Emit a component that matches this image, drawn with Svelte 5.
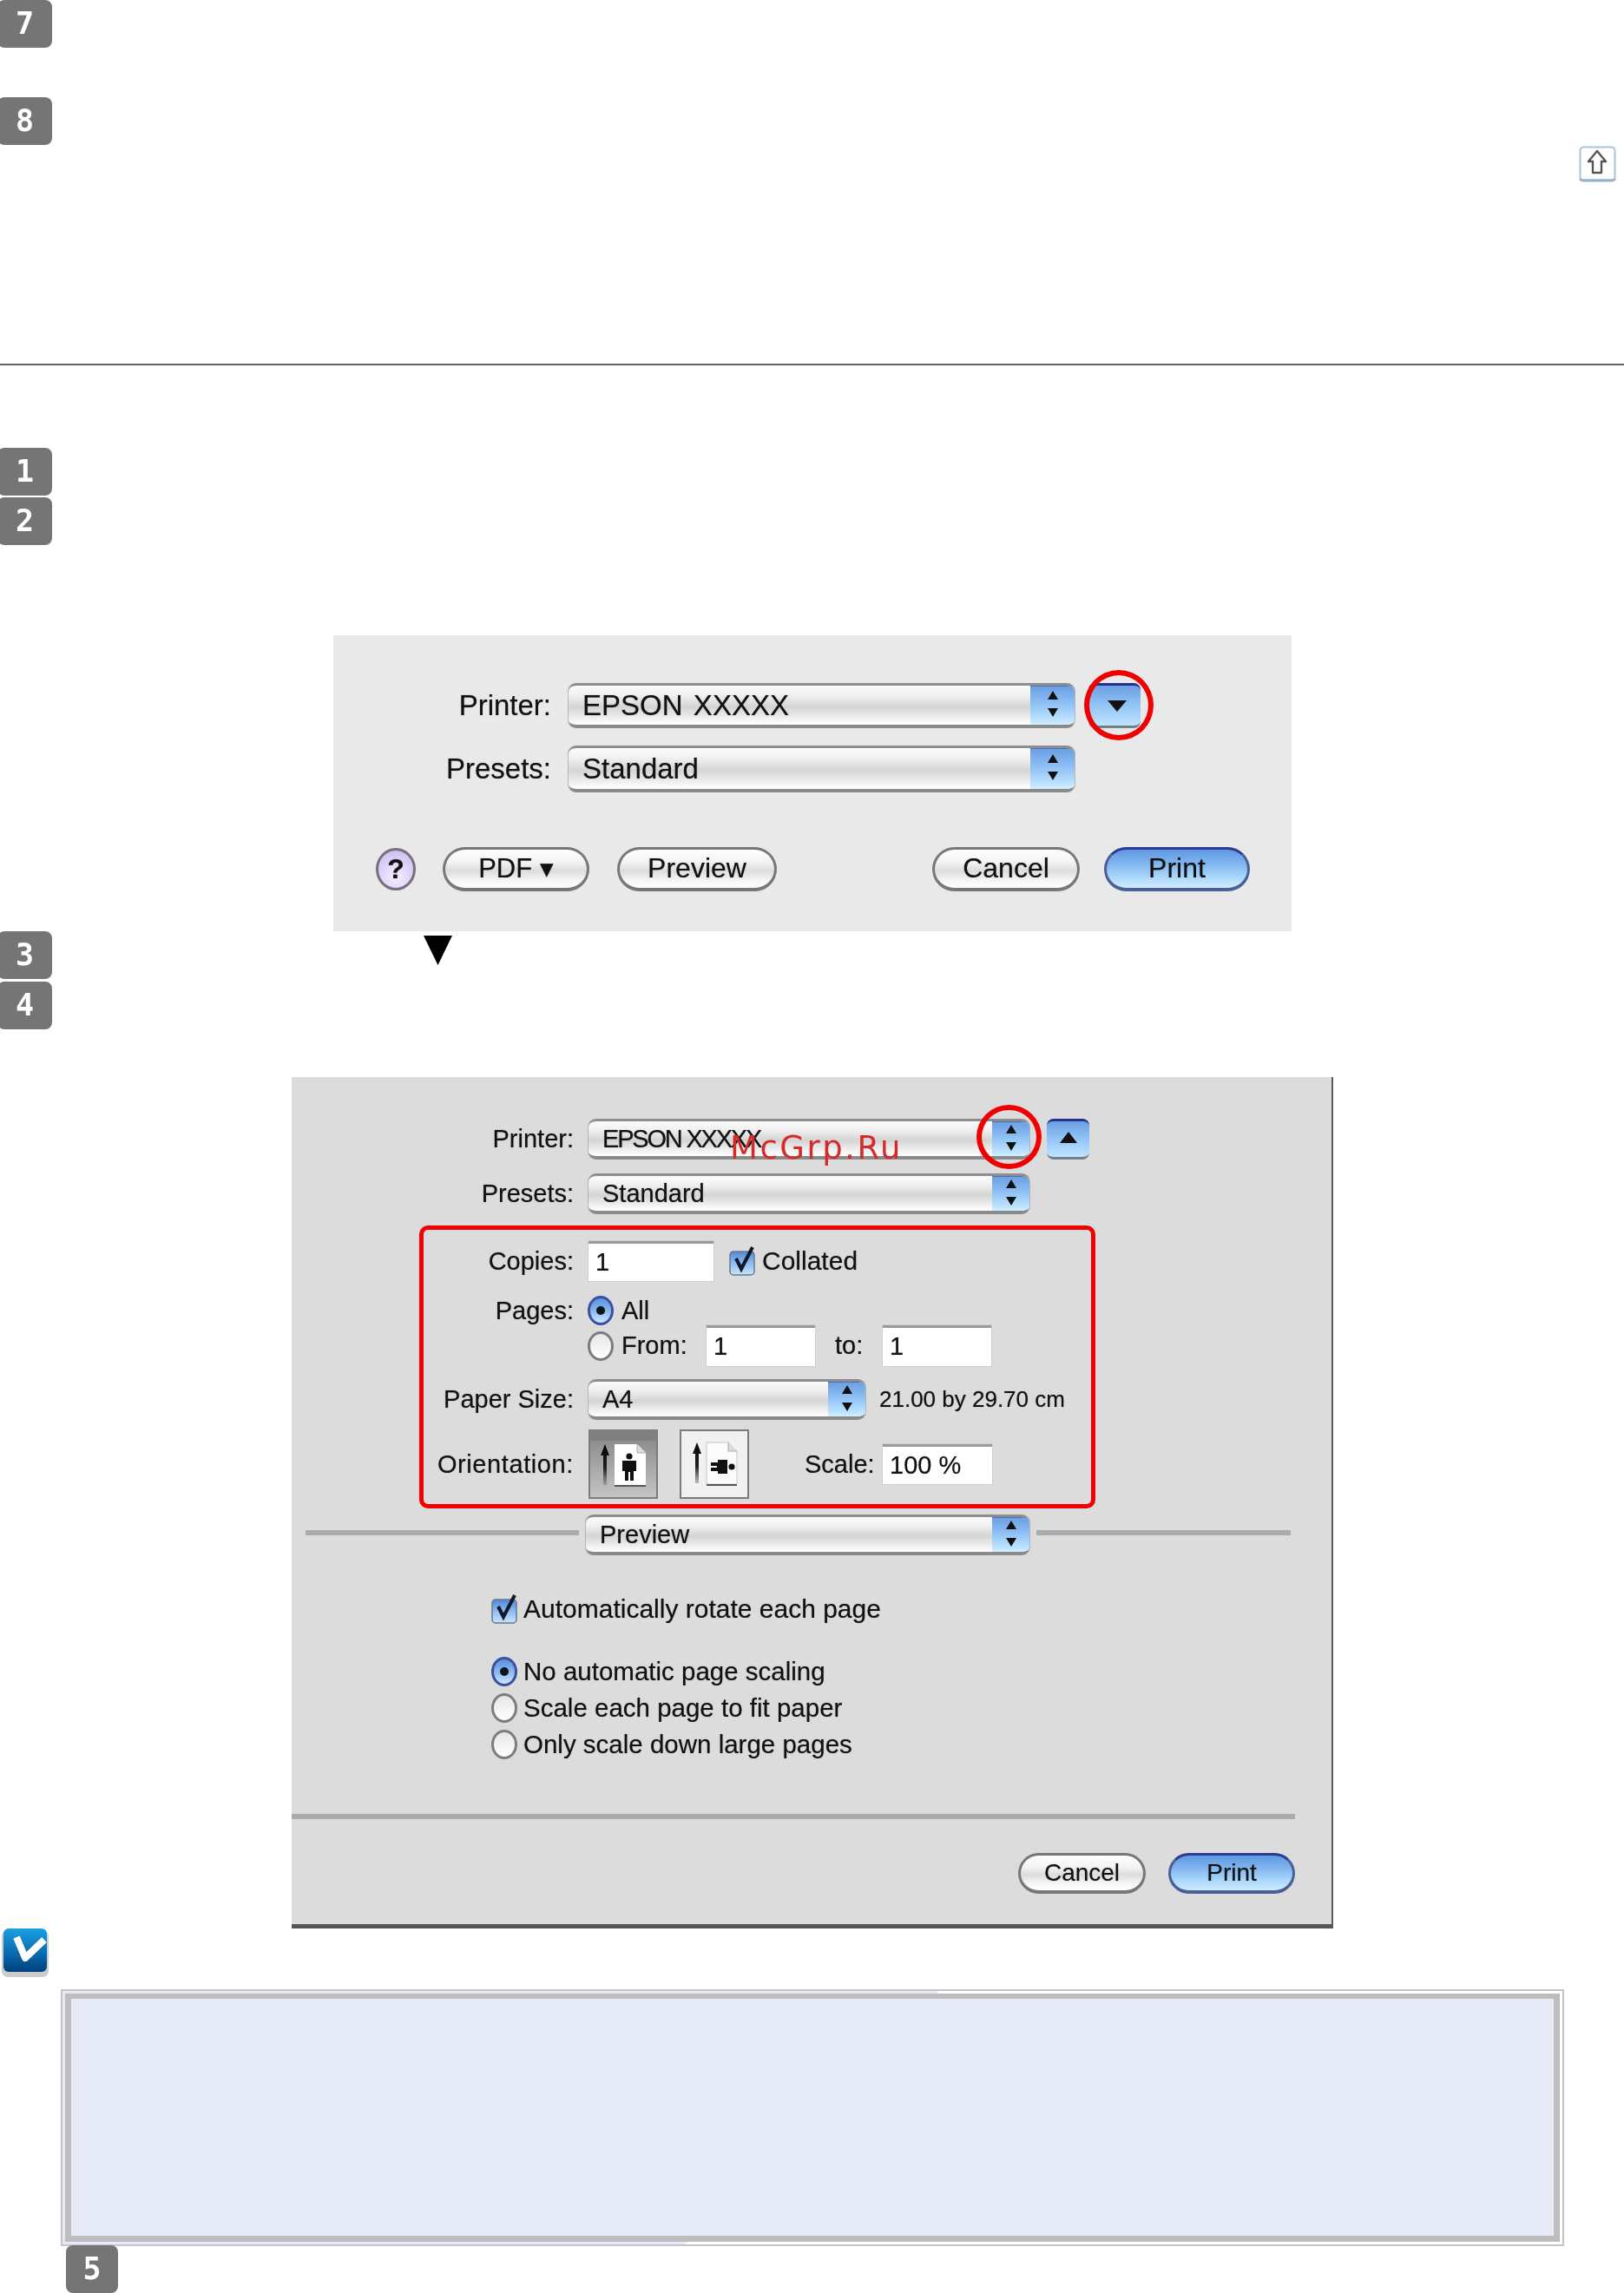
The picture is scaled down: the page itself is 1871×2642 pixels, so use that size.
<script>
  const scaleOptions = [
    { label: 'No automatic page scaling', checked: true },
    { label: 'Scale each page to fit paper', checked: false },
    { label: 'Only scale down large pages', checked: false }
  ];
</script>

{#snippet badge(n)}
  <div class="badge">{n}</div>
{/snippet}

{#snippet stepper()}
  <span class="stepper">
    <svg width="18" height="32" viewBox="0 0 18 32">
      <path d="M9 1 L15 11 H3 Z M3 21 H15 L9 31 Z" fill="#111" />
    </svg>
  </span>
{/snippet}

{#snippet select(text, cls)}
  <div class="select {cls}">
    <span class="select-text">{text}</span>
    {@render stepper()}
  </div>
{/snippet}

{#snippet checkbox()}
  <svg class="check" width="31" height="36" viewBox="0 0 31 36">
    <defs>
      <linearGradient id="cb" x1="0" y1="0" x2="0" y2="1">
        <stop offset="0" stop-color="#4f86d6" />
        <stop offset="0.5" stop-color="#8fbcf0" />
        <stop offset="1" stop-color="#c8e4fd" />
      </linearGradient>
    </defs>
    <rect x="1" y="7" width="28" height="27" rx="4" fill="url(#cb)" stroke="#68788f" stroke-width="1.5" />
    <path d="M8 15 L14 27 L27 2" fill="none" stroke="#10182a" stroke-width="4" />
  </svg>
{/snippet}

{#snippet radio(on)}
  <span class="radio" class:on>
    {#if on}<span class="dot"></span>{/if}
  </span>
{/snippet}

{#snippet aqua(text, cls)}
  <div class="aqua {cls}">{text}</div>
{/snippet}

{#snippet orientArrow(x, y)}
  <path d="M{x} {y} L{x + 5} {y + 13} H{x + 2} V{y + 47} H{x - 2} V{y + 13} H{x - 5} Z" fill="url(#fade)" />
{/snippet}

<div class="page">
  {@render badge(7)}
  <div class="spaced-8">{@render badge(8)}</div>

  <div class="top-link">
    <svg width="44" height="44" viewBox="0 0 44 44">
      <rect x="1.5" y="1.5" width="40" height="38" rx="4" fill="#fff" stroke="#a9c3da" stroke-width="2" />
      <path d="M1.5 38 Q2 40 6 40 H37 Q41 40 41.5 38" fill="none" stroke="#8fb2d2" stroke-width="3" />
      <path d="M21 6 L31 18 H26 V31 H16 V18 H11 Z" fill="#fff" stroke="#555" stroke-width="2.4" stroke-linejoin="round" />
    </svg>
  </div>

  <hr class="rule" />

  <div class="steps-a">
    {@render badge(1)}
    {@render badge(2)}
  </div>

  <div class="dialog-a">
    <div class="soft">
      <div class="row">
        <span class="lbl">Printer:</span>
        {@render select('EPSON  XXXXX', 'wide')}
        <div class="disclosure">
          <svg width="24" height="14" viewBox="0 0 24 14"><path d="M1 1 H23 L12 14 Z" fill="#111" /></svg>
        </div>
      </div>
      <div class="row second">
        <span class="lbl">Presets:</span>
        {@render select('Standard', 'wide tall')}
      </div>
      <div class="btns">
        <div class="help">?</div>
        {@render aqua('PDF ▾', 'pdf')}
        {@render aqua('Preview', 'prev')}
        <span class="grow"></span>
        {@render aqua('Cancel', 'cancel')}
        {@render aqua('Print', 'print')}
      </div>
    </div>
    <div class="ring ring-a"></div>
  </div>

  <div class="step-row">
    {@render badge(3)}
    <svg class="down" width="33" height="34" viewBox="0 0 33 34"><path d="M0 0 H33 L16.5 34 Z" fill="#000" /></svg>
  </div>
  {@render badge(4)}

  <div class="dialog-b">
    <div class="soft">
      <div class="row-b">
        <span class="lbl-b">Printer:</span>
        {@render select('EPSON XXXXX', 'b-main narrow')}
        <div class="disclosure b">
          <svg width="20" height="13" viewBox="0 0 20 13"><path d="M10 0 L20 13 H0 Z" fill="#111" /></svg>
        </div>
      </div>
      <div class="row-b presets">
        <span class="lbl-b">Presets:</span>
        {@render select('Standard', 'b-main')}
      </div>

      <div class="red-box">
        <div class="fields copies">
          <span class="lbl-c">Copies:</span>
          <div class="field f-copies">1</div>
          {@render checkbox()}
          <span class="txt wider">Collated</span>
        </div>
        <div class="fields pages">
          <span class="lbl-c">Pages:</span>
          <span class="radio-left">{@render radio(true)}</span>
          <span class="txt">All</span>
        </div>
        <div class="fields from">
          <span class="lbl-c"></span>
          <span class="radio-left">{@render radio(false)}</span>
          <span class="txt from-txt">From:</span>
          <div class="field f-range">1</div>
          <span class="txt to-txt">to:</span>
          <div class="field f-range">1</div>
        </div>
        <div class="fields paper">
          <span class="lbl-c">Paper Size:</span>
          {@render select('A4', 'b-paper')}
          <span class="size">21.00 by 29.70 cm</span>
        </div>
        <div class="fields orient">
          <span class="lbl-c">Orientation:</span>
          <div class="orient-btn active">
            <svg width="78" height="78" viewBox="0 0 78 78">
              <defs>
                <linearGradient id="fade" x1="0" y1="0" x2="0" y2="1">
                  <stop offset="0" stop-color="#050505" />
                  <stop offset="0.6" stop-color="#222" />
                  <stop offset="1" stop-color="#777" stop-opacity="0.5" />
                </linearGradient>
              </defs>
              {@render orientArrow(17, 15)}
              <path d="M28 15 H54 L64 25 V62 H28 Z" fill="#fff" />
              <path d="M54 15 V25 H64" fill="#ddd" stroke="#aaa" />
              <path d="M28 63 H64" stroke="#555" stroke-width="2" />
              <circle cx="45" cy="29" r="3.6" fill="#111" />
              <path d="M37 34 H53 V46 H50 V57 H46 V47 H44 V57 H40 V46 H37 Z" fill="#111" />
            </svg>
          </div>
          <div class="orient-btn">
            <svg width="78" height="78" viewBox="0 0 78 78">
              {@render orientArrow(18, 13)}
              <path d="M29 13 H54 L64 23 V61 H29 Z" fill="#fbfbfb" stroke="#c6c6c6" />
              <path d="M54 13 V23 H64" fill="#ddd" stroke="#aaa" />
              <path d="M29 62 H64" stroke="#555" stroke-width="2" />
              <circle cx="58" cy="41" r="3.6" fill="#111" />
              <path d="M53 33 V49 H42 V46 H34 V42 H41 V40 H34 V36 H42 V33 Z" fill="#111" />
            </svg>
          </div>
          <span class="txt scale-txt">Scale:</span>
          <div class="field f-scale">100 %</div>
        </div>
      </div>

      <div class="section">
        <span class="line left"></span>
        {@render select('Preview', 'b-section')}
        <span class="line"></span>
      </div>

      <div class="auto">
        {@render checkbox()}
        <span class="txt wider">Automatically rotate each page</span>
      </div>

      <div class="scale-opts">
        {#each scaleOptions as opt}
          <div class="opt">
            {@render radio(opt.checked)}
            <span class="txt">{opt.label}</span>
          </div>
        {/each}
      </div>

      <div class="divider"></div>

      <div class="btns-b">
        {@render aqua('Cancel', 'cancel-b')}
        {@render aqua('Print', 'print print-b')}
      </div>
    </div>
    <div class="ring ring-b"></div>
    <span class="watermark">McGrp.Ru</span>
  </div>

  <div class="note-icon">
    <svg width="58" height="58" viewBox="0 0 58 58">
      <defs>
        <linearGradient id="nb" x1="0" y1="0" x2="0" y2="1">
          <stop offset="0" stop-color="#1aa0e2" />
          <stop offset="0.55" stop-color="#0a6cb0" />
          <stop offset="1" stop-color="#00407e" />
        </linearGradient>
      </defs>
      <rect x="1" y="2" width="54" height="54" rx="7" fill="#ccc" />
      <rect x="3" y="0" width="50" height="50" rx="6" fill="url(#nb)" />
      <path d="M18 10 L28 34 L50 13" fill="none" stroke="#fff" stroke-width="8" stroke-linejoin="round" />
    </svg>
  </div>

  <div class="note"><div class="note-inner"></div></div>

  <div class="step-five">{@render badge(5)}</div>
</div>

<style>
  :global(body) {
    margin: 0;
    background: #fff;
  }

  .page {
    position: relative;
    width: 1871px;
    height: 2642px;
    overflow: hidden;
    font-family: "Liberation Sans", Arial, sans-serif;
    color: #111;
  }

  .badge {
    width: 63px;
    height: 55px;
    margin-left: -3px;
    background: #757575;
    border-radius: 8px;
    color: #fff;
    font-family: "DejaVu Sans Mono", monospace;
    font-weight: 700;
    font-size: 35px;
    line-height: 55px;
    text-align: center;
    filter: blur(0.6px);
  }

  .spaced-8 {
    margin-top: 57px;
  }

  .top-link {
    display: flex;
    justify-content: flex-end;
    padding-right: 8px;
    margin-top: 1px;
    height: 44px;
    filter: blur(0.7px);
  }

  .rule {
    margin: 207px 0 0;
    border: 0;
    height: 2px;
    background: #666;
  }

  .steps-a {
    margin-top: 95px;
    display: flex;
    flex-direction: column;
    gap: 2px;
  }

  .soft {
    filter: blur(0.7px);
    text-shadow: 0 0 1px rgba(0, 0, 0, 0.55);
  }

  .dialog-a {
    position: relative;
    box-sizing: border-box;
    width: 1104px;
    height: 341px;
    margin: 104px 0 0 384px;
    background: #e9e9e9;
    padding-top: 55px;
    font-size: 33px;
  }

  .row {
    display: flex;
    align-items: center;
    gap: 20px;
  }

  .second {
    margin-top: 20px;
  }

  .lbl {
    width: 251px;
    text-align: right;
  }

  .select {
    box-sizing: border-box;
    display: flex;
    align-items: stretch;
    border-radius: 9px;
    border-top: 3px solid #8d8d8d;
    border-bottom: 4px solid #8a8a8a;
    background: linear-gradient(#fbfbfb 0%, #f0f0f0 25%, #d4d4d4 55%, #ededed 80%, #fff 100%);
    overflow: hidden;
    box-shadow: -1px 0 0 #b5b5b5, 1px 0 0 #b5b5b5;
  }

  .select-text {
    flex: 1;
    padding-left: 16px;
    white-space: pre;
    align-self: center;
  }

  .wide .select-text {
    word-spacing: -3px;
  }

  .narrow .select-text {
    letter-spacing: -2.2px;
  }

  .stepper {
    display: flex;
    align-items: center;
    justify-content: center;
    width: 51px;
    margin-top: -3px;
    background: linear-gradient(#2f3f9a 0, #2f3f9a 3px, #6a9fe2 4px, #8fc1f5 50%, #bfe4ff 90%, #d6efff 100%);
  }

  .wide {
    width: 583px;
    height: 52px;
  }

  .tall {
    height: 54px;
  }

  .disclosure {
    box-sizing: border-box;
    width: 60px;
    height: 52px;
    margin-left: -4px;
    padding-left: 5px;
    display: flex;
    align-items: center;
    justify-content: center;
    border-radius: 8px;
    border-top: 3px solid #23308c;
    border-bottom: 3px solid #6f7f8c;
    background: linear-gradient(#6a9fe2, #8fc1f5 45%, #bfe4ff 100%);
  }

  .disclosure.b {
    width: 49px;
    height: 47px;
    margin-left: 3px;
    padding-left: 0;
    padding-bottom: 4px;
  }

  .btns {
    display: flex;
    align-items: center;
    margin: 63px 48px 0 49px;
  }

  .grow {
    flex: 1;
  }

  .help {
    box-sizing: border-box;
    width: 46px;
    height: 49px;
    margin-right: 31px;
    border-radius: 50%;
    border: 3px solid #75707f;
    background: radial-gradient(circle at 50% 70%, #f6f0ff, #c9b4f2);
    font-weight: 700;
    font-size: 32px;
    line-height: 42px;
    text-align: center;
  }

  .aqua {
    box-sizing: border-box;
    height: 51px;
    border-radius: 26px;
    border: 3px solid #777;
    border-bottom-width: 4px;
    background: linear-gradient(#fff, #f2f2f2 35%, #dcdcdc 55%, #f5f5f5 80%, #fff);
    font-size: 32px;
    line-height: 43px;
    text-align: center;
  }

  .pdf {
    width: 169px;
    margin-right: 32px;
    font-size: 31px;
  }

  .prev {
    width: 184px;
  }

  .cancel {
    width: 170px;
    margin-right: 28px;
  }

  .print {
    width: 168px;
    border-color: #4a5f96;
    border-top-color: #2b3a92;
    background: linear-gradient(#5f97e2, #7fb4ee 35%, #a8d6fb 70%, #d0ecff);
  }

  .ring {
    position: absolute;
    box-sizing: border-box;
    border: 6px solid #f00000;
    border-radius: 50%;
  }

  .ring-a {
    left: 865px;
    top: 40px;
    width: 80px;
    height: 81px;
  }

  .step-row {
    position: relative;
  }

  .down {
    position: absolute;
    left: 488px;
    top: 5px;
  }

  .step-row + .badge {
    margin-top: 3px;
  }

  .dialog-b {
    position: relative;
    box-sizing: border-box;
    width: 1200px;
    height: 981px;
    margin: 55px 0 0 336px;
    padding-top: 48px;
    background: #dcdcdc;
    border-right: 2px solid #5a5a5a;
    border-bottom: 5px solid #555;
    font-size: 29px;
  }

  .row-b {
    display: flex;
    align-items: center;
    gap: 17px;
  }

  .presets {
    margin-top: 16px;
  }

  .lbl-b {
    width: 325px;
    text-align: right;
  }

  .b-main {
    width: 508px;
    height: 47px;
  }

  .b-main .stepper,
  .b-paper .stepper,
  .b-section .stepper {
    width: 43px;
  }

  .b-paper {
    width: 319px;
    height: 47px;
  }

  .b-section {
    width: 511px;
    height: 47px;
    flex: none;
  }

  .red-box {
    box-sizing: border-box;
    width: 779px;
    height: 326px;
    margin: 13px 0 0 147px;
    padding-top: 13px;
    border: 5px solid #f00000;
    border-radius: 10px;
    text-shadow: 0 0 1px rgba(0, 0, 0, 0.55);
  }

  .fields {
    display: flex;
    align-items: center;
  }

  .lbl-c {
    flex: none;
    width: 173px;
    margin-right: 17px;
    text-align: right;
  }

  .orient .lbl-c {
    letter-spacing: 0.6px;
  }

  .field {
    box-sizing: border-box;
    height: 46px;
    background: #fff;
    border-top: 3px solid #9a9a9a;
    box-shadow: 0 0 0 1px #cfcfcf;
    padding-left: 8px;
    line-height: 42px;
  }

  .f-copies {
    width: 144px;
    margin-right: 18px;
  }

  .copies .txt {
    margin-left: 7px;
  }

  .wider {
    font-size: 30px;
  }

  .pages {
    margin-top: 17px;
    height: 34px;
  }

  .radio-left {
    display: flex;
    margin-left: -1px;
    margin-right: 9px;
  }

  .from {
    height: 47px;
  }

  .from-txt {
    width: 73px;
    margin-right: 25px;
  }

  .to-txt {
    width: 35px;
    margin: 0 20px 0 23px;
  }

  .f-range {
    width: 125px;
    height: 47px;
  }

  .paper {
    margin-top: 15px;
  }

  .size {
    margin-left: 16px;
    font-size: 26px;
  }

  .orient {
    margin-top: 11px;
    height: 80px;
  }

  .orient-btn {
    box-sizing: border-box;
    width: 80px;
    height: 80px;
    margin-right: 25px;
    border: 2px solid #7c7c7c;
    background: #f1f1f1;
  }

  .orient-btn.active {
    background: linear-gradient(#808080 0, #808080 10px, #8f8f8f 12px, #c4c4c4 100%);
  }

  .scale-txt {
    width: 75px;
    margin: 0 15px 0 39px;
  }

  .f-scale {
    width: 126px;
  }

  .section {
    display: flex;
    align-items: center;
    gap: 8px;
    margin-top: 7px;
    padding-left: 16px;
    width: 1135px;
  }

  .line {
    flex: 1;
    height: 6px;
    background: #ababab;
    margin-bottom: 5px;
  }

  .line.left {
    flex: none;
    width: 315px;
  }

  .auto {
    display: flex;
    align-items: center;
    gap: 6px;
    margin: 44px 0 0 230px;
  }

  .scale-opts {
    display: flex;
    flex-direction: column;
    gap: 7px;
    margin: 36px 0 0 230px;
    font-size: 29.5px;
  }

  .opt {
    display: flex;
    align-items: center;
    gap: 7px;
    height: 35px;
  }

  .radio {
    position: relative;
    box-sizing: border-box;
    flex: none;
    width: 30px;
    height: 34px;
    border-radius: 50%;
    border: 3px solid #7c7c7c;
    background: linear-gradient(#e6e6e6, #fff);
    display: inline-block;
  }

  .radio.on {
    border-color: #3b4f9e;
    background: linear-gradient(#5b90dc, #8dbcf0 55%, #c9e6ff);
  }

  .dot {
    position: absolute;
    left: 7px;
    top: 9px;
    width: 10px;
    height: 10px;
    border-radius: 50%;
    background: #10131c;
  }

  .divider {
    width: 1156px;
    height: 6px;
    margin-top: 63px;
    background: #ababab;
  }

  .btns-b {
    display: flex;
    justify-content: flex-end;
    gap: 26px;
    margin: 39px 42px 0 0;
  }

  .cancel-b {
    width: 147px;
    height: 47px;
    font-size: 28px;
    line-height: 40px;
  }

  .print-b {
    width: 146px;
    height: 47px;
    font-size: 28px;
    line-height: 40px;
  }

  .ring-b {
    left: 789px;
    top: 32px;
    width: 75px;
    height: 74px;
  }

  .watermark {
    position: absolute;
    left: 505px;
    top: 63px;
    font-family: "DejaVu Sans", sans-serif;
    font-size: 37px;
    line-height: 1;
    letter-spacing: 2.5px;
    color: #d42a2a;
    filter: blur(0.4px);
  }

  .note-icon {
    margin-left: 1px;
    height: 58px;
    filter: blur(0.6px);
  }

  .note {
    box-sizing: border-box;
    width: 1732px;
    height: 296px;
    margin: 12px 0 0 70px;
    border: 2px solid #c4c4c4;
    padding: 3px;
    background: linear-gradient(135deg, #e6eaf6 50%, #fff 50%);
  }

  .note-inner {
    box-sizing: border-box;
    height: 100%;
    border: solid #bdbdbd;
    border-width: 6px 7px 7px 7px;
    background: #e6eaf6;
  }

  .step-five {
    margin: -1px 0 0 79px;
  }

  .step-five .badge {
    width: 60px;
  }
</style>
